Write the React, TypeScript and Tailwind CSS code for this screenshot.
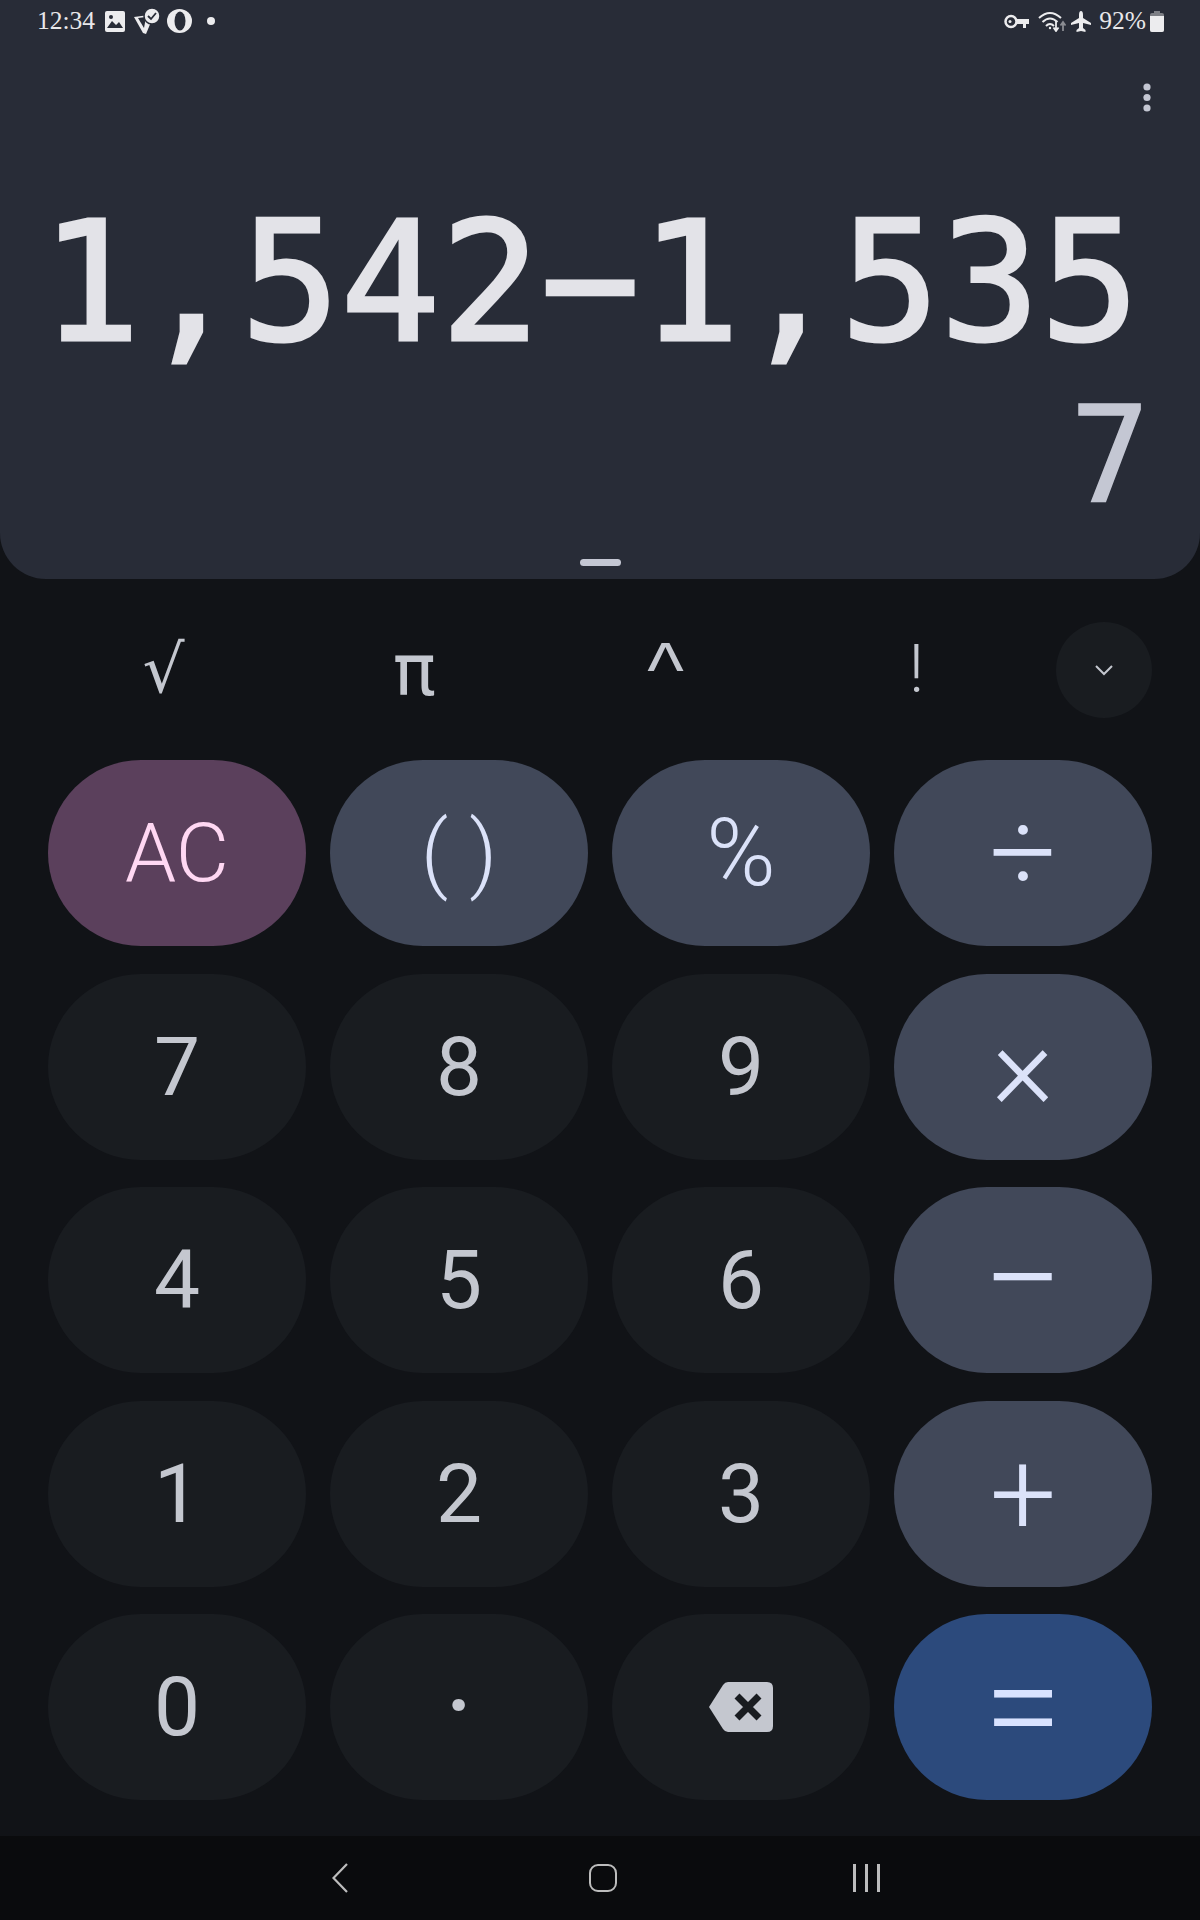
import React from 'react';

const sans = "font-['Roboto',sans-serif]";

const digitCls = 'bg-[#191c20] text-[#c4c7cf] text-[82px]';
const opCls = 'bg-[#414859] text-[#dbe2f9]';

const keys = [
  { label: 'AC', cls: 'bg-[#5b405c] text-[#ffd8f3] text-[82px] font-light' },
  { label: '( )', cls: `${opCls} text-[86px] font-light` },
  { label: '%', cls: `${opCls} text-[94px] font-light` },
  { label: '÷', cls: `${opCls} text-[118px] font-light` },
  { label: '7', cls: digitCls },
  { label: '8', cls: digitCls },
  { label: '9', cls: digitCls },
  { label: '×', cls: `${opCls} text-[120px] font-light` },
  { label: '4', cls: digitCls },
  { label: '5', cls: digitCls },
  { label: '6', cls: digitCls },
  { label: '−', cls: `${opCls} text-[142px] font-light` },
  { label: '1', cls: digitCls },
  { label: '2', cls: digitCls },
  { label: '3', cls: digitCls },
  { label: '+', cls: `${opCls} text-[118px] font-light` },
  { label: '0', cls: digitCls },
  { label: '·', cls: 'bg-[#191c20] text-[#c4c7cf] text-[112px]' },
  { label: 'back', cls: digitCls },
  { label: '=', cls: 'bg-[#2c4a7c] text-[#d8e2ff] text-[142px] font-light' },
];

const Backspace = () => (
  <svg width="64" height="50" viewBox="0 0 64 50">
    <path d="M19 0H58Q64 0 64 6V44Q64 50 58 50H19Q16 50 14 47L0 25L14 3Q16 0 19 0Z" fill="#c4c7cf" />
    <path d="M28 14L50 36M50 14L28 36" stroke="#191c20" strokeWidth="7" />
  </svg>
);

const StatusBar = () => (
  <div className="flex h-[42px] items-center justify-between pl-[37px] pr-[36px] font-['Liberation_Serif',serif] text-[25.5px] text-[#e8e8ea]">
    <div className="flex items-center">
      <span className="leading-none">12:34</span>
      <svg className="ml-[10px]" width="20" height="21" viewBox="0 0 20 21">
        <path d="M2 0H18Q20 0 20 2V19Q20 21 18 21H2Q0 21 0 19V2Q0 0 2 0Z" fill="#ececee" />
        <path d="M2 17L7 10L11 14L14 11L18 17Z" fill="#282c37" />
        <circle cx="6" cy="6" r="2" fill="#282c37" />
      </svg>
      <svg className="ml-[9px]" width="26" height="26" viewBox="0 0 26 26">
        <path d="M0 9L15 7L17 14L12 26L9 25Z" fill="#ececee" />
        <path d="M4 10L12 9L10 20Z" fill="#282c37" />
        <circle cx="18" cy="8" r="8" fill="#ececee" stroke="#282c37" strokeWidth="1.5" />
        <path d="M14 8L17 11L22 5" fill="none" stroke="#282c37" strokeWidth="1.8" />
      </svg>
      <svg className="ml-[7px]" width="25" height="24" viewBox="0 0 25 24">
        <ellipse cx="12.5" cy="12" rx="12.5" ry="12" fill="#ececee" />
        <ellipse cx="13" cy="12" rx="5.5" ry="9.5" fill="#282c37" />
      </svg>
      <span className="ml-[15px] h-2 w-2 rounded-full bg-[#ececee]" />
    </div>
    <div className="flex items-center">
      <svg width="26" height="15" viewBox="0 0 26 15">
        <circle cx="7" cy="7.5" r="5.5" fill="none" stroke="#ececee" strokeWidth="2.5" />
        <circle cx="6" cy="7.5" r="1.5" fill="#ececee" />
        <path d="M12 5H25V10H22V14H19V10H12Z" fill="#ececee" />
      </svg>
      <svg className="ml-[8px]" width="28" height="21" viewBox="0 0 28 21">
        <path d="M1 7Q12 -3 23 7M4.5 11Q12 4 19.5 11M8 15Q12 11 16 15" fill="none" stroke="#ececee" strokeWidth="2" />
        <circle cx="12" cy="17" r="1.2" fill="#ececee" />
        <path d="M18 10V19M15.5 16.5L18 20L20.5 16.5" fill="none" stroke="#ececee" strokeWidth="1.8" />
        <path d="M25 20V12M22.5 14.5L25 11L27.5 14.5" fill="none" stroke="#8a8c92" strokeWidth="1.8" />
      </svg>
      <svg className="ml-[5px]" width="20" height="21" viewBox="0 0 20 21">
        <path d="M10 0Q12 0 12 4V7L20 12V14L12 12V17L14.5 19V21L10 20L5.5 21V19L8 17V12L0 14V12L8 7V4Q8 0 10 0Z" fill="#ececee" />
      </svg>
      <span className="ml-[8px] leading-none">92%</span>
      <svg className="ml-[4px]" width="14" height="21" viewBox="0 0 14 21">
        <path d="M4 0H10V2H12Q14 2 14 4V19Q14 21 12 21H2Q0 21 0 19V4Q0 2 2 2H4Z" fill="#7d7f85" />
        <path d="M0 5H14V19Q14 21 12 21H2Q0 21 0 19Z" fill="#ececee" />
      </svg>
    </div>
  </div>
);

const App: React.FC = () => {
  return (
    <div className="flex h-[1920px] w-[1200px] flex-col overflow-hidden bg-[#111317]">
      {/* Display */}
      <div className="flex h-[579px] shrink-0 flex-col rounded-b-[46px] bg-[#282c37]">
        <StatusBar />
        <div className="flex justify-end pr-[49px] pt-[41px]">
          <svg width="8" height="29" viewBox="0 0 8 29">
            <circle cx="4" cy="4" r="3.6" fill="#c4c7d3" />
            <circle cx="4" cy="14.5" r="3.6" fill="#c4c7d3" />
            <circle cx="4" cy="25" r="3.6" fill="#c4c7d3" />
          </svg>
        </div>
        <div className="mt-[80px] flex h-[182px] justify-end pr-[60px] font-['DejaVu_Sans_Mono',monospace] text-[166px] leading-[182px] whitespace-nowrap text-[#e3e3e8] [-webkit-text-stroke:3px_#e3e3e8]">
          1,542−1,535
        </div>
        <div className="mt-[20px] flex h-[125px] justify-end pr-[50px] font-['DejaVu_Sans_Mono',monospace] text-[133px] leading-[125px] whitespace-nowrap text-[#c4c7d3] [-webkit-text-stroke:1.5px_#c4c7d3]">
          7
        </div>
        <div className="mx-auto mt-auto mb-[13px] h-[7px] w-[41px] rounded-full bg-[#c4c7d3]" />
      </div>

      {/* Scientific row */}
      <div className={`mt-[43px] flex h-[96px] shrink-0 items-center pl-[38px] pr-12 text-[#c4c7cf] ${sans}`}>
        <div className="flex w-[251px] justify-center font-['DejaVu_Sans',sans-serif] text-[66px] leading-none">√</div>
        <div className="flex w-[251px] justify-center font-['DejaVu_Sans',sans-serif] text-[72px] leading-none">π</div>
        <div className="flex w-[251px] justify-center font-['Liberation_Sans',sans-serif] text-[78px] leading-none">^</div>
        <div className="flex w-[251px] justify-center text-[66px] font-light leading-none">!</div>
        <div className="ml-auto flex h-24 w-24 items-center justify-center rounded-full bg-[#191c20]">
          <svg width="20" height="12" viewBox="0 0 20 12">
            <path d="M2 2L10 10L18 2" fill="none" stroke="#c4c7cf" strokeWidth="2" />
          </svg>
        </div>
      </div>

      {/* Keypad */}
      <div className={`mt-[42px] grid grid-cols-4 gap-x-6 gap-y-[27.6px] px-12 ${sans}`}>
        {keys.map((k) => (
          <div
            key={k.label}
            className={`flex h-[186px] items-center justify-center rounded-full leading-none ${k.cls}`}
          >
            {k.label === 'back' ? <Backspace /> : k.label}
          </div>
        ))}
      </div>

      {/* Nav bar */}
      <div className="mt-auto flex h-[84px] shrink-0 items-center bg-[#0a0b0d] pl-[332px]">
        <svg width="16" height="30" viewBox="0 0 16 30">
          <path d="M15 1L1.5 15L15 29" fill="none" stroke="#bdbdbd" strokeWidth="2.2" />
        </svg>
        <div className="ml-[241px] h-[28px] w-[28px] rounded-[9px] border-2 border-[#bdbdbd]" />
        <div className="ml-[236px] flex h-[28px] gap-[9.5px]">
          <div className="w-[2.5px] bg-[#bdbdbd]" />
          <div className="w-[2.5px] bg-[#bdbdbd]" />
          <div className="w-[2.5px] bg-[#bdbdbd]" />
        </div>
      </div>
    </div>
  );
};

export default App;
